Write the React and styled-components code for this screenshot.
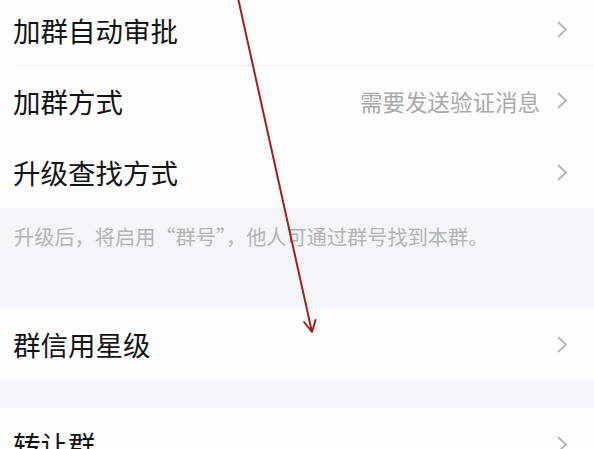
import React from "react";
import styled, { createGlobalStyle } from "styled-components";

const GlobalStyle = createGlobalStyle`
  html, body {
    margin: 0;
    padding: 0;
    background: #f4f5f8;
    overflow: hidden;
  }
  body {
    font-family: "Noto Sans CJK SC", "Noto Sans", sans-serif;
  }
`;

const Page = styled.div`
  position: relative;
  width: 594px;
  height: 449px;
  overflow: hidden;
  background: #f4f5f8;
`;

const List = styled.div`
  margin-top: -6px;
  display: flex;
  flex-direction: column;
`;

const Group = styled.div`
  background: #fdfdfd;
  display: flex;
  flex-direction: column;
`;

const Row = styled.div`
  height: ${(p) => p.$h || 71}px;
  display: flex;
  align-items: center;
  padding: 0 26px 0 13px;
  position: relative;
  box-sizing: border-box;

  & + &::before {
    content: "";
    position: absolute;
    top: 0;
    left: 15px;
    right: 0;
    height: 1px;
    background: #eeeef0;
  }
`;

const Label = styled.span`
  flex: 1;
  font-size: 27.5px;
  color: #141414;
  line-height: 1;
  padding-top: 2px;
`;

const Value = styled.span`
  font-size: 22.5px;
  color: #a9a9ab;
  margin-right: 17px;
  line-height: 1;
  padding-top: 2px;
`;

const Chevron = styled.svg`
  width: 11px;
  height: 17px;
  flex: none;
`;

const Note = styled.div`
  height: 100px;
  padding: 16px 14px 0;
  box-sizing: border-box;
  font-size: 20.2px;
  color: #b3b3b8;
  line-height: 1.3;
`;

const Gap = styled.div`
  height: 28px;
`;

const Overlay = styled.svg`
  position: absolute;
  left: 0;
  top: 0;
  pointer-events: none;
`;

const Arrow = () => (
  <Chevron viewBox="0 0 11 17">
    <path d="M1.5 1.5 L9 8.5 L1.5 15.5" fill="none" stroke="#b5b5b7" strokeWidth="1.8" strokeLinecap="round" strokeLinejoin="round" />
  </Chevron>
);

const Item = ({ label, value, h }) => (
  <Row $h={h}>
    <Label>{label}</Label>
    {value && <Value>{value}</Value>}
    <Arrow />
  </Row>
);

export default function App() {
  return (
    <Page>
      <GlobalStyle />
      <List>
        <Group>
          <Item label="加群自动审批" />
          <Item label="加群方式" value="需要发送验证消息" />
          <Item label="升级查找方式" h={72} />
        </Group>
        <Note>升级后，将启用“群号”，他人可通过群号找到本群。</Note>
        <Group>
          <Item label="群信用星级" h={72} />
        </Group>
        <Gap />
        <Group>
          <Item label="转让群" h={72} />
        </Group>
      </List>
      <Overlay width="594" height="449" viewBox="0 0 594 449">
        <line x1="238" y1="-2" x2="311.5" y2="330" stroke="#a81c1c" strokeWidth="2" />
        <path d="M304 322 L312 332 L315.5 320" fill="none" stroke="#a81c1c" strokeWidth="2" strokeLinecap="round" strokeLinejoin="round" />
      </Overlay>
    </Page>
  );
}
